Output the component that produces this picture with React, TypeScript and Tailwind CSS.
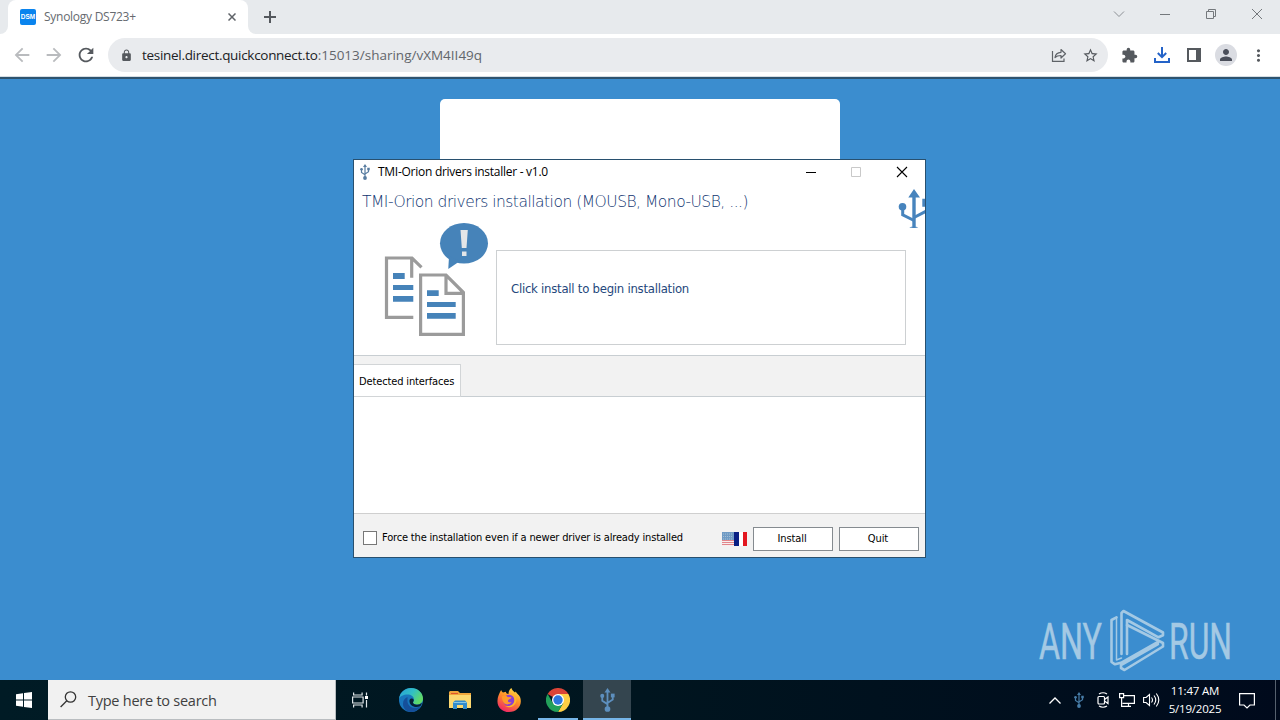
import type { ReactNode } from "react";
import { MdArrowBack, MdArrowForward, MdRefresh, MdLock, MdStarBorder, MdExtension, MdPerson, MdMoreVert } from "react-icons/md";

function UsbIcon({ className }: { className?: string }) {
  return (
    <svg viewBox="0 0 20 32" className={className} fill="currentColor" stroke="none">
      <path d="M10 0l4 6H6z" />
      <path d="M10 4v23M3 11v6l7 4.5M17 11v4.5L10 20" fill="none" stroke="currentColor" strokeWidth="2.4" />
      <circle cx="3" cy="10.5" r="2.7" />
      <rect x="14.5" y="7.5" width="5" height="5" />
      <circle cx="10" cy="28" r="3.8" />
    </svg>
  );
}

function BrowserTabs() {
  return (
    <div className="flex h-[34px] bg-[#e7eaed]">
      <div className="flex w-2 bg-white">
        <div className="w-full rounded-br-lg bg-[#e7eaed]" />
      </div>
      <div className="flex h-full w-60 items-center rounded-t-lg bg-white pl-3">
        <div className="flex size-4 items-center justify-center rounded-[2px] bg-[#0a84ee] font-['Liberation_Sans'] text-[6.5px] font-bold text-white">DSM</div>
        <span className="ml-2 w-[180px] font-['Open_Sans',sans-serif] text-[12px] tracking-[-0.27px] text-[#666a6f]">Synology DS723+</span>
        <svg viewBox="0 0 8 8" className="ml-1 size-2" stroke="#5f6368" strokeWidth="1.5">
          <path d="M.5.5l7 7M7.5.5l-7 7" />
        </svg>
      </div>
      <div className="flex w-2 bg-white">
        <div className="w-full rounded-bl-lg bg-[#e7eaed]" />
      </div>
      <svg viewBox="0 0 12 12" className="mt-[11px] ml-2 size-3" stroke="#54585d" strokeWidth="2">
        <path d="M6 0v12M0 6h12" />
      </svg>
      <div className="mt-2 mr-[17px] ml-auto flex h-3 gap-[34px]">
        <svg viewBox="0 0 12 12" className="size-3" fill="none" stroke="#8c9095">
          <path d="M1 3.500l5 5 5-5" />
        </svg>
        <svg viewBox="0 0 12 12" className="size-3" fill="none" stroke="#74787c">
          <path d="M1 6.500h10" />
        </svg>
        <svg viewBox="0 0 12 12" className="size-3" fill="none" stroke="#74787c">
          <path d="M1.500 3.500h7v7h-7zM3.500 3.500v-2h7v7h-2" />
        </svg>
        <svg viewBox="0 0 12 12" className="size-3" fill="none" stroke="#74787c">
          <path d="M1 1l10 10M11 1L1 11" />
        </svg>
      </div>
    </div>
  );
}

function BrowserToolbar() {
  return (
    <div className="flex h-[42px] items-center bg-white pl-[11px] text-[#55595e]">
      <MdArrowBack size={22} className="text-[#b9bbbe]" />
      <MdArrowForward size={22} className="ml-[10px] text-[#b9bbbe]" />
      <MdRefresh size={22} className="ml-[10px]" />
      <div className="ml-[11px] flex h-[34px] w-[1000px] items-center rounded-full bg-[#e9ebee] pl-3">
        <MdLock size={13} />
        <span className="ml-[9px] font-['Open_Sans',sans-serif] text-[13.5px] text-[#62666b]">
          <span className="tracking-[-0.3px] text-[#202124]">tesinel.direct.quickconnect.to</span>:15013/sharing/vXM4II49q
        </span>
        <svg viewBox="0 0 16 16" className="mr-[15px] ml-auto size-4" fill="none" stroke="#5f6368" strokeWidth="1.2">
          <path d="M1.500 4v10.400h11.500v-3" />
          <path d="M4 10.500c.5-3.500 2.500-5 6-5.200V2.500l4.500 4.300-4.500 4.200V8.500c-2.800 0-4.500.5-6 2z" strokeLinejoin="round" />
        </svg>
        <MdStarBorder size={17} className="mr-[9px]" />
      </div>
      <MdExtension size={17} className="ml-[13px]" />
      <svg viewBox="0 0 16 16" className="ml-4 size-4" fill="none" stroke="#2463c8" strokeWidth="2">
        <path d="M8 0v10M3.800 6L8 10.200 12.200 6M1 11v4h14v-4" />
      </svg>
      <svg viewBox="0 0 14 14" className="ml-[17px] size-[14px]">
        <path d="M0 0h14v14H0zM2 2v10h7V2z" fill="#55595e" fillRule="evenodd" />
      </svg>
      <div className="ml-[14px] flex size-[22px] items-center justify-center rounded-full bg-[#dadce2]">
        <MdPerson size={18} className="text-[#4a4e5a]" />
      </div>
      <MdMoreVert size={19} className="ml-3" />
    </div>
  );
}

function CopyArtwork() {
  return (
    <svg viewBox="0 0 106 116" className="h-[116px] w-[106px]">
      <g fill="none" stroke="#9b9b9b" strokeWidth="3.2">
        <path d="M29.300 95.300H2.500V36H28l9.500 9.300M27.700 36v19.700" />
        <path d="M36.600 53H62l17.400 17.500v41.900H36.600zM62 53v18.300h17.400" />
      </g>
      <g fill="#4683b9">
        <path d="M9 51h11.700v6H9zM9 63h20.300v5H9zM9 74h20.300v5.700H9z" />
        <path d="M43 68.300h11.700V74H43zM43 80h28.700v5H43zM43 91h28.700v5.700H43z" />
        <ellipse cx="80" cy="21.3" rx="24" ry="20.3" />
        <path d="M65 34l-.7 13L76 39z" />
      </g>
      <path d="M76.500 8h7.300l-1.300 18h-4.700zM78 29.600h4.500V34H78z" fill="#e4e6e8" />
    </svg>
  );
}

function PushButton({ children }: { children: ReactNode }) {
  return (
    <button className="flex h-6 w-20 items-center justify-center border border-[#858b90] bg-white pt-0.5 pr-0.5 text-[11px] tracking-[-0.1px]">{children}</button>
  );
}

function InstallerWindow() {
  return (
    <div className="absolute top-[159px] left-[353px] flex h-[399px] w-[573px] flex-col border border-[#28506f] bg-white font-['DejaVu_Sans_Condensed','DejaVu_Sans',sans-serif] text-black">
      <div className="flex h-6 items-center pl-[5px]">
        <UsbIcon className="h-4 w-3 text-[#587ca0]" />
        <span className="ml-[7px] font-['Open_Sans',sans-serif] text-[12px] tracking-[-0.27px]">TMI-Orion drivers installer - v1.0</span>
        <div className="mr-[17px] ml-auto flex gap-[34px]">
          <svg viewBox="0 0 12 12" className="size-3" stroke="#000">
            <path d="M2 6.500h10" />
          </svg>
          <svg viewBox="0 0 12 12" className="size-3" fill="none" stroke="#c9c9c9">
            <path d="M1.500 1.500h9v9h-9z" />
          </svg>
          <svg viewBox="0 0 12 12" className="size-3" stroke="#000" strokeWidth="1.1">
            <path d="M1 1l10 10M11 1L1 11" />
          </svg>
        </div>
      </div>

      <div className="flex h-[171px] flex-col">
        <div className="flex h-[38px] justify-between">
          <h1 className="pt-[7px] pl-[8px] font-['DejaVu_Sans',sans-serif] text-[15.5px] leading-[22px] font-extralight tracking-[-0.5px] text-[#0f3470]">TMI-Orion drivers installation (MOUSB, Mono-USB, ...)</h1>
          <svg viewBox="0 0 27 40" className="mt-1 h-10 w-[27px] shrink-0" fill="#4784bd">
            <path d="M16 1l6 8.500H10.300zM14.300 8h3.400v32h-3.400zM24.300 10.700H32v8h-7.700zM11.300 39.700c2-1.500 7-1.500 9 0z" />
            <circle cx="4.5" cy="18.8" r="3.8" />
            <path d="M4.700 19v7.800L16 32.500M28.500 18v5L16 29.500" fill="none" stroke="#4784bd" strokeWidth="3" />
          </svg>
        </div>
        <div className="flex pl-[30px]">
          <CopyArtwork />
          <div className="mt-7 ml-[6px] h-[95px] w-[410px] border border-[#cdd0d2] pt-[29px] pl-[14px] text-[13px] leading-[18px] tracking-[-0.25px] text-[#25477c]">Click install to begin installation</div>
        </div>
      </div>

      <div className="flex h-[42px] items-end border-y border-[#c8ced2] bg-[#f2f2f2]">
        <div className="-mb-px flex h-[33px] w-[107px] items-center border-t border-r border-b border-[#d2d5d7] bg-white pt-[3px] pl-[5px] text-[11px] tracking-[-0.13px]">Detected interfaces</div>
      </div>
      <div className="h-[116px]" />
      <div className="flex flex-1 items-center border-t border-[#cfcfcf] bg-[#f2f2f2] pt-[6px] pr-[6px] pl-[9px]">
        <div className="mb-[2px] size-[14px] border border-[#777] bg-white" />
        <span className="ml-[5px] text-[11px] tracking-[-0.17px]">Force the installation even if a newer driver is already installed</span>
        <svg viewBox="0 0 25 14" className="mr-[6px] ml-auto h-[14px] w-[25px]">
          <path d="M0 0h12v14H0z" fill="#f6eeee" />
          <path d="M0 8.500h12M0 10.500h12M0 12.500h12" stroke="#e2858b" />
          <path d="M0 0h12v8H0z" fill="#709bc5" />
          <path d="M1 2h10M1 4.500h10M1 7h10" stroke="#a5bfd5" strokeDasharray="1 1" />
          <path d="M12 0h5v14h-5z" fill="#081f84" />
          <path d="M17 0h4v14h-4z" fill="#fff" />
          <path d="M21 0h4v14h-4z" fill="#e31720" />
        </svg>
        <div className="flex gap-[6px]">
          <PushButton>Install</PushButton>
          <PushButton>Quit</PushButton>
        </div>
      </div>
    </div>
  );
}

function Watermark() {
  return (
    <svg viewBox="0 0 220 70" className="absolute top-[608px] left-[1036px] h-[70px] w-[220px]">
      <g fill="#a4c9e4" stroke="#a4c9e4" strokeWidth=".5" fontFamily="Roboto, sans-serif" fontSize="50">
        <text x="3" y="51" textLength="63" lengthAdjust="spacingAndGlyphs">ANY</text>
        <text x="133" y="51" textLength="63" lengthAdjust="spacingAndGlyphs">RUN</text>
      </g>
      <g fill="none" stroke="#a4c9e4" strokeWidth="2.6" strokeLinejoin="round" strokeLinecap="round">
        <path d="M80.500 9.300L75.500 12v42l3.500 2.300 6-1.500L122 34" />
        <path d="M80.500 9.300V52L85.500 50" strokeWidth="1.5" />
        <path d="M85.500 46V5l2-2 39.500 21.500v2.800l-4.500 2L91 12v34" />
        <path d="M91 17l36 18v3.500L88.500 62 85 60v-3L122 36" />
      </g>
    </svg>
  );
}

function EdgeLogo() {
  return (
    <svg viewBox="0 0 24 24" className="size-6">
      <defs>
        <linearGradient id="edgeTop" x1="0" y1="0" x2="1" y2=".5">
          <stop offset="0" stopColor="#279fd9" />
          <stop offset=".55" stopColor="#31bfc5" />
          <stop offset="1" stopColor="#60da66" />
        </linearGradient>
      </defs>
      <circle cx="12" cy="12" r="12" fill="#1876bd" />
      <path d="M0 11C1 4 6 0 12 0c7 0 12 5 12 10.500 0 4-3 6-6 6-2.500 0-4-1-4-2 0-.8 1-1 1-3 0-3-3-5-6.500-5C4.500 6.500 1 8 0 11z" fill="url(#edgeTop)" />
      <path d="M8.500 11c-1 7 5 11 13 7.500-2 3.500-5.500 5.500-9.500 5.500C7 24 4 20 4 16s2-6 4.500-7z" fill="#154f9a" />
      <path d="M14 14.500c0 1 1.500 2.200 4 2.200 2 0 3.600-.8 4.800-2-.2 2-1 3-1.600 3.600-5 2.200-11.200-.3-10.700-6 .3-1.300 1.500-2 2.500-1.800 1.200.2 2 1 1.700 2.200-.2.800-.7 1.100-.7 1.800z" fill="#062036" />
    </svg>
  );
}

function ExplorerLogo() {
  return (
    <svg viewBox="0 0 22 20" className="h-5 w-[22px]">
      <path d="M0 2l1-1h8l2 2h11v5H0z" fill="#f0a63b" />
      <path d="M2 3h7v1H2z" fill="#df542d" />
      <path d="M0 5h22v13H0z" fill="#fcd870" />
      <path d="M4 19v-6.500l2-2h10l2 2V19h-4v-4H8v4z" fill="#328bcd" />
      <path d="M4.500 12.500h13" stroke="#87c6e5" />
    </svg>
  );
}

function FirefoxLogo() {
  return (
    <svg viewBox="0 0 24 24" className="size-6">
      <defs>
        <linearGradient id="foxFire" x1=".8" y1="0" x2=".3" y2="1">
          <stop offset="0" stopColor="#ffe34b" />
          <stop offset=".45" stopColor="#ff9228" />
          <stop offset="1" stopColor="#ef2466" />
        </linearGradient>
      </defs>
      <path d="M3 4l1.200-2c.3 1.200 1 2 1.800 2.500L9 3.800C8.800 5.200 10 6 11.500 6c0-2.500 1-5 3-6 .2 2 2 3 3.500 4.500l.8-1c.5 1.500 3 3 4.200 5.500 3 7.500-2.500 15-11 15C5 24 0 19 .5 12.500.6 9 1.800 6.500 3 4z" fill="url(#foxFire)" />
      <circle cx="12" cy="12.5" r="5.7" fill="#8a3fd5" />
      <path d="M5 8.500c2-1.500 4.500-1 5.500.5l4 .3c-.5 2-3 1.700-3.500 3.200-.3 1.500 1 2.300 3.500 1.500-2 3.500-7 3-8.500-.5C5 11.500 5 10 5 8.500z" fill="#ff9b2a" />
      <path d="M14.500 5c4 2 6 6 4.500 9.500-2 4.500-7 6-11 3.500 5 1 9-1.500 9.300-5.500.2-3-1.300-5-2.800-7.500z" fill="#ffb42c" />
    </svg>
  );
}

function ChromeLogo() {
  return (
    <svg viewBox="0 0 24 24" className="size-6">
      <path d="M12 12L1.600 6A12 12 0 0 1 22.400 6z" fill="#db4437" />
      <path d="M12 12V6h10.400A12 12 0 0 1 12 24l5.200-9z" fill="#ffce44" />
      <path d="M12 12l5.200 3L12 24A12 12 0 0 1 1.600 6l5.200 9z" fill="#22a05a" />
      <circle cx="12" cy="12" r="6" fill="#fff" />
      <circle cx="12" cy="12" r="4.7" fill="#2d76de" />
    </svg>
  );
}

function Taskbar() {
  return (
    <div className="flex h-10 bg-linear-to-r from-[#001b25] via-[#00151f] to-[#000a1c] font-['Open_Sans',sans-serif] text-white">
      <div className="flex w-12 items-center justify-center">
        <svg viewBox="0 0 16 16" className="size-4" fill="#fff">
          <path d="M0 2.300L7 1.300v6.200H0zM8 1.100L16 0v7.500H8zM0 8.500h7v6.200l-7-1zM8 8.500h8V16l-8-1.100z" />
        </svg>
      </div>
      <div className="flex w-72 items-center border-r border-b border-[#b9bdc0] bg-[#f1f1f1] pl-3">
        <svg viewBox="0 0 17 17" className="size-[17px]" fill="none" stroke="#333" strokeWidth="1.3">
          <circle cx="10.5" cy="6" r="5.2" />
          <path d="M6.800 9.700L.6 16" />
        </svg>
        <span className="mt-0.5 ml-[11px] text-[14.5px] tracking-[-0.25px] text-[#404040]">Type here to search</span>
      </div>
      <div className="flex w-12 items-center justify-center">
        <svg viewBox="0 0 16 16" className="size-4" fill="none" stroke="#dfe5e8" strokeWidth="1.2">
          <path d="M1.600.5V3h8.500V.5M1.600 15.500V13h8.500v2.500M.6 5h10.500v6H.6zM14.500.5v3M14.500 8v7.500" />
          <path d="M13 4h3v3h-3z" fill="#fff" stroke="none" />
        </svg>
      </div>
      <div className="ml-[3px] flex w-12 items-center justify-center"><EdgeLogo /></div>
      <div className="ml-px flex w-12 items-center justify-center"><ExplorerLogo /></div>
      <div className="ml-px flex w-12 items-center justify-center"><FirefoxLogo /></div>
      <div className="ml-[5px] flex w-10 items-center justify-center border-b-2 border-[#76b5e8] pt-0.5"><ChromeLogo /></div>
      <div className="ml-[5px] flex w-12 items-center justify-center border-b-2 border-[#76b5e8] bg-[#34454f] pt-0.5">
        <UsbIcon className="h-6 w-[15px] text-[#5d8fbe]" />
      </div>

      <div className="ml-auto flex items-center">
        <svg viewBox="0 0 12 7" className="h-[7px] w-3" fill="none" stroke="#fff" strokeWidth="1.3">
          <path d="M.5 6.500L6 1l5.500 5.500" />
        </svg>
        <UsbIcon className="ml-3 h-4 w-3 text-[#477da8]" />
        <svg viewBox="0 0 12 16" className="ml-3 h-4 w-3" fill="none" stroke="#fff" strokeWidth="1.2">
          <rect x="1" y="4.5" width="6.5" height="7.5" rx="1" />
          <path d="M7.500 7.500L11 5v6.500L7.500 9M2 2Q6-.5 10 2M2 14Q6 16.500 10 14" />
        </svg>
        <svg viewBox="0 0 16 14" className="ml-[10px] h-[14px] w-4" fill="none" stroke="#fff" strokeWidth="1.2">
          <path d="M5 2.600h10.400v7.800H3.500M.6.6h4v4h-4zM2.600 5v8.400H12M9.500 10.400v3" />
        </svg>
        <svg viewBox="0 0 17 16" className="ml-2 h-4 w-[17px]" fill="none" stroke="#fff" strokeWidth="1.1">
          <path d="M.6 5.500h2.500L6.500 2.500v11L3.100 10.500H.6zM8.500 5.500q2 2.500 0 5M11 3.500q3.500 4.500 0 9M13.300 1.500q5 6.500 0 13" />
        </svg>
        <div className="ml-[9px] flex w-[52px] flex-col items-center text-[11.5px] leading-[18px] whitespace-nowrap">
          <span className="tracking-[-0.2px]">11:47 AM</span>
          <span className="tracking-[-0.2px]">5/19/2025</span>
        </div>
        <svg viewBox="0 0 16 17" className="mr-5 ml-[18px] h-[17px] w-4" fill="none" stroke="#fff" strokeWidth="1.2">
          <path d="M.6 1.600h14.800v11.400H11L8 16l-3-3H.6z" />
        </svg>
        <div className="mr-1 h-10 w-px bg-[#56616e]" />
      </div>
    </div>
  );
}

export default function App() {
  return (
    <div className="relative flex h-[720px] w-[1280px] flex-col overflow-hidden bg-[#3b8dcf]">
      <BrowserTabs />
      <BrowserToolbar />
      <div className="h-[3px] border-t border-[#d5dde3] bg-[#2e536f]" />
      <main className="flex flex-1 justify-center pt-5">
        <div className="h-[300px] w-[400px] rounded-[5px] bg-white" />
      </main>
      <Taskbar />
      <InstallerWindow />
      <Watermark />
    </div>
  );
}
